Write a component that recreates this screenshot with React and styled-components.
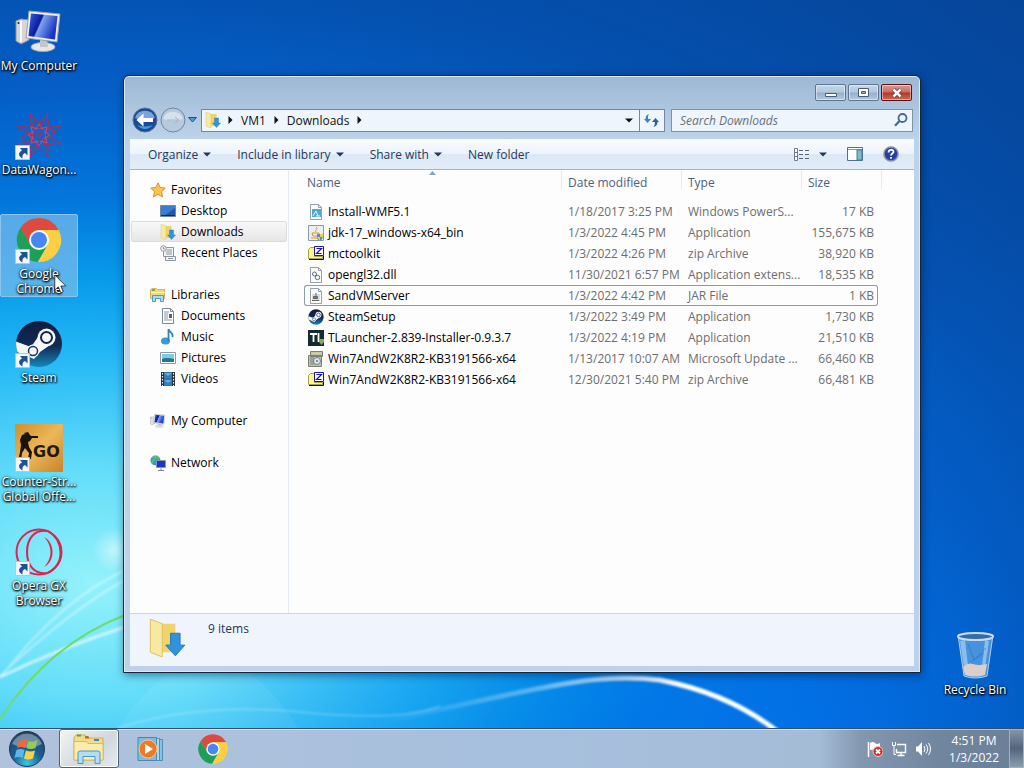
import React from "react";
import styled, { createGlobalStyle, css } from "styled-components";

const GlobalStyle = createGlobalStyle`
  * {
    box-sizing: border-box;
  }

  body {
    margin: 0;
    font-family: "Open Sans", "Noto Sans", sans-serif;
    font-size: 12px;
    line-height: 15px;
    color: #000;
  }

  button, input {
    font: inherit;
    color: inherit;
  }

  svg {
    display: block;
    flex-shrink: 0;
  }
`;

/* Desktop */

const Screen = styled.div`
  position: relative;
  display: flex;
  flex-direction: column;
  min-height: 100vh;
  overflow: hidden;
  background: radial-gradient(
      ellipse 60% 75% at 78% 100%,
      rgba(0, 124, 250, 0.65),
      rgba(0, 110, 230, 0.3) 50%,
      transparent
    ),
    radial-gradient(
      ellipse 88% 76% at 9% 76%,
      #94f2fb 0%,
      #62dcf9 20%,
      #22b6f5 40%,
      #089bea 52%,
      #0276dc 66%,
      #045fc8 84%,
      #0450ae 105%,
      #064396 150%
    );
`;

const Wallpaper = styled.svg`
  position: absolute;
  inset: 0;
  width: 100%;
  height: 100%;
`;

const Desktop = styled.main`
  position: relative;
  flex: 1;
  display: flex;
  justify-content: space-between;
  padding: 6px 10px 30px 0;
`;

const ShortcutColumn = styled.div`
  display: grid;
  grid-auto-rows: 104px;
  align-content: start;
  align-items: start;
`;

const Shortcut = styled.button`
  position: relative;
  display: flex;
  flex-direction: column;
  align-items: center;
  gap: 2px;
  width: 78px;
  padding: 1px 0 0;
  border: 1px solid transparent;
  border-radius: 2px;
  background: none;
  ${(props) =>
    props.$selected &&
    css`
      border-color: #8cc4ee;
      background: rgba(140, 195, 238, 0.62);
    `}
`;

const ShortcutLabel = styled.span`
  color: #fff;
  text-shadow: 0 1px 2px #000, 1px 1px 2px #000, 0 0 3px rgba(0, 0, 0, 0.7);
  white-space: pre;
`;

const BinSlot = styled.div`
  align-self: flex-end;
`;

const Pointer = styled.svg`
  position: absolute;
  left: 53px;
  top: 59px;
`;

/* Explorer window */

const Window = styled.section`
  position: absolute;
  inset: 75px 103px 55px 123px;
  display: flex;
  flex-direction: column;
  padding: 0 6px 6px;
  border: 1px solid #12263c;
  border-radius: 6px 6px 0 0;
  background: linear-gradient(#9db8d4, #bdd3ea 64px, #bdd2ea);
  box-shadow: inset 0 0 0 1px #dcebf7, 1px 2px 8px rgba(0, 20, 60, 0.5);
`;

const TitleBar = styled.header`
  display: flex;
  justify-content: flex-end;
  gap: 2px;
  height: 32px;
  padding: 8px 2px 0;
`;

const CaptionButton = styled.button`
  display: flex;
  align-items: center;
  justify-content: center;
  width: 31px;
  height: 17px;
  padding: 0;
  border: 1px solid ${(props) => (props.$close ? "#58131a" : "#60758f")};
  border-radius: 2px;
  background: ${(props) =>
    props.$close
      ? "linear-gradient(#dd9b93, #cb6a5f 48%, #b33527 52%, #cf6c55)"
      : "linear-gradient(#c3d6e9, #b3c8de 48%, #94afca 52%, #b2cbe2)"};
  box-shadow: inset 0 0 0 1px rgba(255, 255, 255, 0.45);
`;

const NavRow = styled.div`
  display: flex;
  align-items: center;
  height: 31px;
  padding: 0 1px 7px 2px;
`;

const RoundButton = styled.button`
  padding: 0;
  margin-right: 2px;
  border: 0;
  background: none;
`;

const BareButton = styled.button`
  display: flex;
  align-items: center;
  gap: 5px;
  padding: 0;
  border: 0;
  background: none;
`;

const AddressBar = styled.div`
  display: flex;
  flex: 1;
  align-items: center;
  height: 23px;
  margin: 0 6px 0 4px;
  padding-left: 3px;
  border: 1px solid #7088a3;
  background: #eff5fc;
`;

const Crumbs = styled.nav`
  display: flex;
  flex: 1;
  align-items: center;
  gap: 8px;
  padding-left: 7px;
`;

const Crumb = styled.a`
  color: #111;
  text-decoration: none;
`;

const RefreshButton = styled.button`
  display: flex;
  align-items: center;
  justify-content: center;
  width: 25px;
  height: 21px;
  margin-left: 6px;
  padding: 0;
  border: 0;
  border-left: 1px solid #7088a3;
  background: none;
`;

const SearchBox = styled.div`
  display: flex;
  align-items: center;
  width: 31%;
  height: 23px;
  padding: 0 4px 0 8px;
  border: 1px solid #7c93ae;
  background: #eff5fc;
`;

const SearchInput = styled.input`
  flex: 1;
  min-width: 0;
  padding: 0;
  border: 0;
  outline: 0;
  background: none;
  font-style: italic;

  &::placeholder {
    color: #66707c;
    opacity: 1;
  }
`;

const Client = styled.div`
  display: flex;
  flex: 1;
  flex-direction: column;
  min-height: 0;
  background: #fdfdfe;
`;

const Toolbar = styled.div`
  display: flex;
  align-items: center;
  gap: 26px;
  height: 31px;
  padding: 0 15px 0 18px;
  border-bottom: 1px solid #a3b4cb;
  background: linear-gradient(#fafcff, #edf4fc 48%, #dde8f5 52%, #e3edf8);
  color: #1e395b;
`;

const ToolbarRight = styled.div`
  display: flex;
  align-items: center;
  gap: 20px;
  margin-left: auto;
`;

const Panes = styled.div`
  display: flex;
  flex: 1;
  min-height: 0;
`;

const Sidebar = styled.nav`
  width: 159px;
  padding: 9px 1px;
  border-right: 1px solid #e3e9f2;
`;

const Group = styled.div`
  margin-bottom: 21px;
`;

const Place = styled.a`
  display: flex;
  align-items: center;
  gap: 5px;
  height: 21px;
  padding-left: ${(props) => (props.$child ? 28 : 18)}px;
  border: 1px solid ${(props) => (props.$selected ? "#dcdcdc" : "transparent")};
  border-radius: 2px;
  background: ${(props) =>
    props.$selected ? "linear-gradient(#f8f8f8, #e6e6e6)" : "none"};
  color: #000;
  text-decoration: none;
`;

const FilePane = styled.div`
  flex: 1;
  min-width: 0;
  padding: 0 32px 0 15px;
`;

const FileTable = styled.table`
  width: 100%;
  table-layout: fixed;
  border-collapse: separate;
  border-spacing: 0;
  white-space: nowrap;
`;

const divider = css`
  background: linear-gradient(#e2e8f0, #e9edf3) right top / 1px 19px no-repeat;
`;

const HeadCell = styled.th`
  position: relative;
  width: ${(props) => props.$width || "auto"};
  height: 31px;
  padding: 5px 0 0 ${(props) => (props.$first ? 3 : 6)}px;
  color: #4c607a;
  font-weight: 400;
  text-align: left;
  vertical-align: top;
  ${(props) => !props.$last && divider}
`;

const HeadEnd = styled.td`
  width: 4px;
  padding: 0;
  ${divider}
`;

const SortMark = styled.svg`
  position: absolute;
  left: calc(50% - 4px);
  top: 1px;
`;

const FileRow = styled.tr`
  td {
    height: 21px;
    padding: 0 0 0 6px;
    border: solid transparent;
    border-width: 1px 0;
    color: #6d6d6d;
  }

  td:first-child {
    padding-left: 3px;
    border-left-width: 1px;
    border-radius: 3px 0 0 3px;
    color: #000;
  }

  td:last-child {
    padding-right: 3px;
    border-right-width: 1px;
    border-radius: 0 3px 3px 0;
    text-align: right;
  }

  ${(props) =>
    props.$focused &&
    css`
      td {
        border-color: #8b9bb0;
      }
    `}
`;

const FileName = styled.span`
  display: flex;
  align-items: center;
  gap: 4px;
`;

const DetailsPane = styled.footer`
  display: flex;
  gap: 22px;
  height: 53px;
  padding: 5px 18px;
  border-top: 1px solid #cfd5de;
  background: #f0f4fc;
  color: #1e395b;
`;

const ItemCount = styled.span`
  padding-top: 2px;
`;

/* Taskbar */

const Taskbar = styled.footer`
  position: relative;
  display: flex;
  height: 40px;
  border-top: 1px solid #31506f;
  background: linear-gradient(
    to right,
    #b0c2dc,
    #a7c0dd 50%,
    #a5bcd7 80%,
    #8397b0 84%,
    #71859f 92%,
    #6a7f98
  );
  box-shadow: inset 0 1px 0 rgba(255, 255, 255, 0.5);
`;

const StartButton = styled.button`
  width: 58px;
  padding: 0 0 0 8px;
  border: 0;
  background: none;
`;

const TaskButton = styled.button`
  display: flex;
  align-items: center;
  justify-content: center;
  width: 60px;
  margin: 0 1px;
  padding: 0;
  border: 1px solid ${(props) => (props.$active ? "#4f6279" : "transparent")};
  border-radius: 3px;
  background: ${(props) =>
    props.$active ? "linear-gradient(135deg, #f2f4f6, #cfd7e0 60%, #e6ebf0)" : "none"};
  ${(props) => props.$active && "box-shadow: inset 0 0 0 1px #fff;"}
`;

const Tray = styled.div`
  display: flex;
  align-items: center;
  gap: 8px;
  margin-left: auto;
`;

const Clock = styled.time`
  padding: 0 2px 0 10px;
  color: #fff;
  line-height: 17px;
  text-align: center;
`;

const ShowDesktop = styled.button`
  width: 15px;
  height: 39px;
  padding: 0;
  border: 1px solid #a2b1c1;
  background: linear-gradient(#8494a6, #52667c 50%, #8a9bad);
`;

/* Drawings */

const Caret = ({ color = "#1e395b" }) => (
  <svg width="8" height="5" viewBox="0 0 8 5">
    <path d="M0 .5h8l-4 4z" fill={color} />
  </svg>
);

const CrumbArrow = () => (
  <svg width="5" height="8" viewBox="0 0 5 8">
    <path d="M.5 0l4 4-4 4z" fill="#111" />
  </svg>
);

const ShortcutArrow = () => (
  <g>
    <path d="M.5 33.500h14v14H.5z" fill="#f4f8fc" stroke="#b8c6d4" strokeWidth="1" />
    <path
      d="M5 36h7.500v7.500L10 41c-2 1-3 2.600-2.500 5.500C3 44 3 40.500 7 38.500z"
      fill="#1d5294"
      stroke="none"
    />
  </g>
);

const ChromeMark = () => (
  <g>
    <path d="M24 14H43.600A22 22 0 0 0 5.500 12L15.340 29 24 24z" fill="#de4b3d" />
    <path
      d="M24 14H43.600A22 22 0 0 0 5.500 12L15.340 29 24 24z"
      fill="#1e9e58"
      transform="rotate(-120 24 24)"
    />
    <path
      d="M24 14H43.600A22 22 0 0 0 5.500 12L15.340 29 24 24z"
      fill="#fdcf43"
      transform="rotate(120 24 24)"
    />
    <circle cx="24" cy="24" r="10" fill="#fff" />
    <circle cx="24" cy="24" r="8" fill="#4587f3" />
  </g>
);

const ComputerIcon = ({ size = 48 }) => (
  <svg width={size} height={size} viewBox="0 0 48 48">
    <defs>
      <linearGradient id="screen" x1="0" y1="0" x2="1" y2=".4">
        <stop offset="0" stopColor="#3b62df" />
        <stop offset=".45" stopColor="#0a1ba0" />
        <stop offset=".5" stopColor="#7fa2ee" />
        <stop offset="1" stopColor="#1734c4" />
      </linearGradient>
    </defs>
    <path d="M1 13l5-2 8 1v20l-8 4-5-3z" fill="#d4d6d8" stroke="#8f9498" />
    <path d="M6 13v21" stroke="#f7f7f7" strokeWidth="2" />
    <circle cx="3.500" cy="15" r="1" fill="#222" />
    <ellipse cx="28" cy="39" rx="12" ry="4.500" fill="#e6e7e9" stroke="#a7abb0" />
    <path d="M25 30l7 1 1 8h-8z" fill="#c3c7cb" />
    <path d="M14 3l31 3-3 28-31-4z" fill="#eceef0" stroke="#9ba1a8" />
    <path d="M16 5.500l26.500 2.600-2.500 23.400-26.500-3.500z" fill="url(#screen)" />
  </svg>
);

const DataWagonIcon = () => (
  <svg width="48" height="48" viewBox="0 0 48 48">
    <g fill="none" stroke="#a8305a" strokeWidth=".8">
      {[0, 45, 90, 135, 180, 225, 270, 315].map((a) => (
        <g key={a} transform={`rotate(${a} 24 23)`}>
          <path d="M24 15l9-7 1 9-10 5M15 2l9 8 9-8M24 10v5M15 2l3 13" />
          <path d="M20 18l4-6 4 6" stroke="#e0405f" strokeWidth="1" />
          <circle cx="15" cy="2" r=".8" fill="#d6324f" />
        </g>
      ))}
    </g>
    <ShortcutArrow />
  </svg>
);

const ChromeIcon = ({ size = 48, shortcut }) => (
  <svg width={size} height={size} viewBox="0 0 48 48">
    <ChromeMark />
    {shortcut && <ShortcutArrow />}
  </svg>
);

const SteamIcon = ({ size = 48, shortcut }) => (
  <svg width={size} height={size} viewBox="0 0 48 48">
    <defs>
      <linearGradient id="steam" x1="0" y1="0" x2="0" y2="1">
        <stop offset="0" stopColor="#121a3c" />
        <stop offset=".55" stopColor="#102c58" />
        <stop offset="1" stopColor="#1786b8" />
      </linearGradient>
      <clipPath id="disc">
        <circle cx="24" cy="24" r="23" />
      </clipPath>
    </defs>
    <circle cx="24" cy="24" r="23" fill="url(#steam)" />
    <g clipPath="url(#disc)">
      <path d="M0 21l16 6 7-10 15 6-13 9-6 7-19-8z" fill="#f4f6f8" />
    </g>
    <circle cx="18" cy="31" r="6.500" fill="#f4f6f8" />
    <circle cx="18" cy="31" r="4.500" fill="none" stroke="#17365f" strokeWidth="1.500" />
    <circle cx="31.500" cy="17.500" r="9" fill="#f4f6f8" />
    <circle cx="31.500" cy="17.500" r="5.500" fill="#f4f6f8" stroke="#15264b" strokeWidth="2" />
    {shortcut && <ShortcutArrow />}
  </svg>
);

const CounterStrikeIcon = () => (
  <svg width="48" height="48" viewBox="0 0 48 48">
    <defs>
      <linearGradient id="sand" x1="0" y1="0" x2="1" y2="1">
        <stop offset="0" stopColor="#cf8f2c" />
        <stop offset=".5" stopColor="#eab75a" />
        <stop offset="1" stopColor="#c98428" />
      </linearGradient>
    </defs>
    <path d="M0 0h48v48H0z" fill="url(#sand)" />
    <path
      d="M9 9l4-1 2 3 1 1h7v2h-6l-2 3-2 1 1 5 3 5-1 7h-3l1-6-4-5-3 5-1 8H3l2-9 1-7-1-5 2-5 3-1z"
      fill="#1c1409"
    />
    <text
      x="18"
      y="33"
      fontFamily="DejaVu Sans, sans-serif"
      fontSize="16"
      fontWeight="700"
      fill="#241a0c"
    >
      GO
    </text>
    <ShortcutArrow />
  </svg>
);

const OperaIcon = () => (
  <svg width="48" height="48" viewBox="0 0 48 48" fill="none" stroke="#dc2450">
    <circle cx="24" cy="24" r="22.500" strokeWidth="2" />
    <path
      d="M33 3C20 1 12 10 12 24s8 23 21 21M33 3C40 7 45 14 45.500 24S40 41 33 45"
      strokeWidth="2"
    />
    <path
      d="M29 9c6 3 8.500 9 8.500 15s-2.500 12-8.500 15c4-4 6.500-9 6.500-15S33 13 29 9z"
      fill="#dc2450"
      stroke="none"
    />
    <ShortcutArrow />
  </svg>
);

const BinIcon = () => (
  <svg width="48" height="48" viewBox="0 0 48 48">
    <path d="M7 3h35l-6 41q-12 4-23 0z" fill="#75b2e8" fillOpacity=".6" stroke="#acd2ee" />
    <path d="M9 9l5 33h4L14 8zM38 9l-5 34h-3l4-35z" fill="#d3e8f8" fillOpacity=".5" />
    <path d="M12 35q5-5 10-3t14 0l-2 11q-10 3-20 0z" fill="#dccfca" />
    <path d="M17 12l6 16 12-12M20 30l13-9" fill="none" stroke="#3674ba" strokeOpacity=".7" />
    <ellipse cx="24.500" cy="4.500" rx="17.500" ry="3.500" fill="#346aa8" stroke="#c7dceb" strokeWidth="2" />
  </svg>
);

const FolderIcon = ({ size = 16 }) => (
  <svg width={size} height={size} viewBox="0 0 16 16">
    <path d="M5 2h6.500v12H5z" fill="#efd36d" />
    <path d="M1 0l5 2v14l-5-2z" fill="#f7e8a2" stroke="#dcc05c" strokeWidth=".4" />
    <path d="M9.500 6h4v5h2l-4 4.500L7.500 11h2z" fill="#3093dc" stroke="#2272bb" strokeWidth=".4" />
  </svg>
);

const StarIcon = () => (
  <svg width="16" height="16" viewBox="0 0 16 16">
    <path
      d="M8 .8l2.200 4.700 5.100.6-3.800 3.500 1 5.200L8 12.300l-4.500 2.500 1-5.200L.7 6.100l5.100-.6z"
      fill="#fcc34e"
      stroke="#e78a2d"
    />
  </svg>
);

const DesktopIcon = () => (
  <svg width="16" height="16" viewBox="0 0 16 16">
    <path d="M.5 2.500h15v11H.5z" fill="#2457a8" stroke="#6f87a3" />
    <path d="M1 3h14v2L5 12H1z" fill="#3d7dd0" />
    <path d="M1 12h14v1H1z" fill="#1b2b44" />
  </svg>
);

const RecentIcon = () => (
  <svg width="16" height="16" viewBox="0 0 16 16" fill="#f2f4f6" stroke="#8d969f">
    <path d="M3.500 2.500h10v9h-10zM5.500 11.500h10v4h-10z" />
    <circle cx="3.500" cy="3.500" r="2.800" />
    <path d="M3.500 2v2H5M7 5h5M6 7h6M6 9h6M8 13.500h5" fill="none" />
  </svg>
);

const LibraryIcon = () => (
  <svg width="16" height="16" viewBox="0 0 16 16">
    <path d="M.5 2.500l2-1h4l1 1h7v9H.5z" fill="#f5d977" stroke="#d8b44d" />
    <path d="M2 3h3" stroke="#49a24a" strokeWidth="1.500" />
    <path d="M1 5.500h14" stroke="#fff2b5" />
    <path d="M2.500 14.500v-6h11v6h-3v-3h-5v3z" fill="#a5dcf3" stroke="#4b9ecb" />
  </svg>
);

const DocumentIcon = () => (
  <svg width="16" height="16" viewBox="0 0 16 16">
    <path d="M2.500.5h8l3 3v12h-11z" fill="#fff" stroke="#7f8994" />
    <path d="M10.500.5v3h3" fill="none" stroke="#7f8994" />
    <path d="M4 4h5M4 6h4M4 8h4M4 10h4M4 12h8" stroke="#8b97a5" />
    <path d="M9 6h3v4H9z" fill="#59626d" />
  </svg>
);

const MusicIcon = () => (
  <svg width="16" height="16" viewBox="0 0 16 16">
    <ellipse cx="5.500" cy="12" rx="4.500" ry="3.500" fill="#3a9ad8" />
    <path d="M8.500 12V0c1 3.500 5 3.500 4 8" fill="none" stroke="#2b82c6" strokeWidth="1.800" />
  </svg>
);

const PictureIcon = () => (
  <svg width="16" height="16" viewBox="0 0 16 16">
    <path d="M.5 2.500h15v11H.5z" fill="#fff" stroke="#8d98a3" />
    <path d="M2 4h12v8H2z" fill="#7bcbe9" />
    <path d="M2 9q4-2 12 0v3H2z" fill="#247789" />
  </svg>
);

const VideoIcon = () => (
  <svg width="16" height="16" viewBox="0 0 16 16">
    <path d="M1 1h14v14H1z" fill="#2b3138" />
    <path d="M4 1.500h8v6H4zM4 8.500h8v6H4z" fill="#5caee5" />
    <path d="M4 2l4 3 4-3v5H4zM4 9l4 3 4-3v5H4z" fill="#2f80c0" />
    <path d="M2.500 2v13M13.500 2v13" stroke="#fff" strokeDasharray="1.500 1.500" />
  </svg>
);

const NetworkIcon = () => (
  <svg width="16" height="16" viewBox="0 0 16 16">
    <circle cx="5.500" cy="5.500" r="5" fill="#2c9bc6" />
    <path d="M2 3c3-3 5-1 3 1S1 7 3 8M7 1l2 3" stroke="#62c470" strokeWidth="1.500" fill="none" />
    <path d="M6.500 5.500h9v7h-9z" fill="#1c35c5" stroke="#8a98ac" />
    <path d="M11 13v2M8 15.500h6" stroke="#7b8898" />
  </svg>
);

const PageShape = () => (
  <>
    <path d="M2.500.5h8l3 3v12h-11z" fill="#fbfcfd" stroke="#97a1ac" />
    <path d="M10.500.5v3h3" fill="none" stroke="#97a1ac" />
  </>
);

const FileIcon = ({ kind }) => {
  if (kind === "steam") return <SteamIcon size={16} />;
  return (
    <svg width="16" height="16" viewBox="0 0 16 16">
      {kind === "script" && (
        <>
          <PageShape />
          <path d="M4 5h9v8H4z" fill="#50aacf" />
          <path d="M5 12l3-5 2 5M8 12h4" stroke="#e6f5fb" fill="none" />
        </>
      )}
      {kind === "java" && (
        <>
          <path d="M.5.5h15v15H.5z" fill="#eceff1" stroke="#8c9aa7" />
          <path d="M8 2c3 2-2 3 0 5M4 8h7v3H5zM3 13h9" stroke="#d8912c" fill="none" />
          <path d="M9 9h6v3q-1 3-3 4-3-1-3-4z" fill="#538dc5" />
          <path d="M12 9h3v3h-3zM9 12h3v4z" fill="#e9d34b" />
        </>
      )}
      {kind === "zip" && (
        <>
          <path d="M.5 3.500l2-2h4v9h8v2H.5z" fill="#fbf88c" stroke="#a5a243" />
          <path d="M1 13.500h14.500V10" stroke="#111" fill="none" />
          <path d="M6.500.5h9v9h-9z" fill="#fff" stroke="#1b16a0" />
          <path d="M8.500 2.500h5l-5 5h5" fill="none" stroke="#1b16a0" strokeWidth="1.200" />
        </>
      )}
      {kind === "dll" && (
        <>
          <PageShape />
          <circle cx="6.500" cy="7" r="2" fill="none" stroke="#5e6b78" />
          <circle cx="9.500" cy="10.500" r="2.200" fill="none" stroke="#5e6b78" />
        </>
      )}
      {kind === "jar" && (
        <>
          <PageShape />
          <path d="M4 6h8v7H4z" fill="#d8dcdf" />
          <path d="M5.500 8.500h4v2h-4zM8 5v3M4 12.500h7" fill="#777" stroke="#666" />
        </>
      )}
      {kind === "launcher" && (
        <>
          <path d="M0 0h16v16H0z" fill="#142b2f" />
          <path d="M2 4h7M5.500 4v8M10.500 3v8h2" stroke="#fff" strokeWidth="1.800" fill="none" />
          <path d="M11 9h5v3l-2.500 3-2.500-3z" fill="#87a85f" />
        </>
      )}
      {kind === "update" && (
        <>
          <path d="M2.500.5h12v5h-12zM.5 4.500h13v11H.5z" fill="#bfc3b4" stroke="#7b8074" />
          <path d="M4 2.500h9" stroke="#d9d27c" strokeWidth="1.500" />
          <path d="M2 6h4v8H2z" fill="#9ba394" />
          <circle cx="9" cy="10" r="3.500" fill="#dfe5e7" stroke="#78828a" />
          <circle cx="9" cy="10" r="1" fill="#6c7880" />
        </>
      )}
    </svg>
  );
};

const StartOrb = () => (
  <svg width="38" height="38" viewBox="0 0 38 38">
    <defs>
      <radialGradient id="orb" cx=".5" cy=".9" r=".9">
        <stop offset="0" stopColor="#37c8e8" />
        <stop offset=".45" stopColor="#1c5f95" />
        <stop offset="1" stopColor="#223f62" />
      </radialGradient>
    </defs>
    <circle cx="19" cy="19" r="17.500" fill="url(#orb)" stroke="#22384f" />
    <path d="M4 14a16 16 0 0 1 30 0q-14 7-30 0z" fill="#c8dcea" fillOpacity=".45" />
    <path d="M11 11q4-3 8-1l-2 8q-4-2-8 0z" fill="#ee6a33" />
    <path d="M20.500 11q4 2 9-1l-2 8q-5 2-9 0z" fill="#9acb48" />
    <path d="M8.500 20q4-2 8 0l-2 8q-4-2-8 0z" fill="#5fb5ea" />
    <path d="M18 20.500q4 2 9 0l-2 8q-5 2-9 0z" fill="#fbd14c" />
  </svg>
);

const ExplorerIcon = () => (
  <svg width="34" height="32" viewBox="0 0 34 32">
    <path d="M2 5l2-3h9l2 3h16v22H2z" fill="#f3dc84" stroke="#cfae50" />
    <path d="M5 2.500h4M13 4h3" stroke="#5f9f4d" strokeWidth="2" />
    <path d="M13 4.500h4" stroke="#d65b3d" strokeWidth="2" />
    <path d="M22 7h5" stroke="#3f85ca" strokeWidth="2" />
    <path d="M2 8.500h12l2 2h15V27H2z" fill="#fbedae" stroke="#d7ba61" />
    <path d="M6 30.500V20q0-2 2-2h18q2 0 2 2v10.500h-5v-7H11v7z" fill="#b4ddf2" stroke="#4698c8" />
  </svg>
);

const MediaIcon = () => (
  <svg width="28" height="26" viewBox="0 0 28 26">
    <path d="M7 3.500h18.500v21H7z" fill="#8ec1df" stroke="#4d8fb8" />
    <path d="M4 2.500h18.500v22H4z" fill="#b1d6ea" stroke="#4d8fb8" />
    <path d="M1 1.500h18.500v23H1z" fill="#80bbdc" stroke="#4689b3" />
    <circle cx="11" cy="13" r="9" fill="#ee7a25" stroke="#fac797" />
    <path d="M8 8l8 5-8 5z" fill="#fff" />
  </svg>
);

const SearchIcon = () => (
  <svg width="14" height="14" viewBox="0 0 14 14" fill="none" stroke="#416a9c">
    <circle cx="8.500" cy="5" r="4" strokeWidth="1.800" />
    <path d="M5.500 8L1 12.800" strokeWidth="2.300" />
  </svg>
);

const shortcuts = [
  { label: "My Computer", icon: <ComputerIcon /> },
  { label: "DataWagon...", icon: <DataWagonIcon /> },
  { label: "Google\nChrome", icon: <ChromeIcon shortcut />, selected: true },
  { label: "Steam", icon: <SteamIcon shortcut /> },
  { label: "Counter-Str...\nGlobal Offe...", icon: <CounterStrikeIcon /> },
  { label: "Opera GX\nBrowser", icon: <OperaIcon /> },
];

const places = [
  {
    label: "Favorites",
    icon: <StarIcon />,
    items: [
      { label: "Desktop", icon: <DesktopIcon /> },
      { label: "Downloads", icon: <FolderIcon />, selected: true },
      { label: "Recent Places", icon: <RecentIcon /> },
    ],
  },
  {
    label: "Libraries",
    icon: <LibraryIcon />,
    items: [
      { label: "Documents", icon: <DocumentIcon /> },
      { label: "Music", icon: <MusicIcon /> },
      { label: "Pictures", icon: <PictureIcon /> },
      { label: "Videos", icon: <VideoIcon /> },
    ],
  },
  { label: "My Computer", icon: <ComputerIcon size={16} />, items: [] },
  { label: "Network", icon: <NetworkIcon />, items: [] },
];

const files = [
  ["script", "Install-WMF5.1", "1/18/2017 3:25 PM", "Windows PowerS...", "17 KB"],
  ["java", "jdk-17_windows-x64_bin", "1/3/2022 4:45 PM", "Application", "155,675 KB"],
  ["zip", "mctoolkit", "1/3/2022 4:26 PM", "zip Archive", "38,920 KB"],
  ["dll", "opengl32.dll", "11/30/2021 6:57 PM", "Application extens...", "18,535 KB"],
  ["jar", "SandVMServer", "1/3/2022 4:42 PM", "JAR File", "1 KB"],
  ["steam", "SteamSetup", "1/3/2022 3:49 PM", "Application", "1,730 KB"],
  ["launcher", "TLauncher-2.839-Installer-0.9.3.7", "1/3/2022 4:19 PM", "Application", "21,510 KB"],
  ["update", "Win7AndW2K8R2-KB3191566-x64", "1/13/2017 10:07 AM", "Microsoft Update ...", "66,460 KB"],
  ["zip", "Win7AndW2K8R2-KB3191566-x64", "12/30/2021 5:40 PM", "zip Archive", "66,481 KB"],
];

const Backdrop = () => (
  <Wallpaper viewBox="0 0 1024 768" preserveAspectRatio="none" fill="none" aria-hidden="true">
    <defs>
      <filter id="soft">
        <feGaussianBlur stdDeviation="1" />
      </filter>
      <radialGradient id="glow">
        <stop offset="0" stopColor="#fff" stopOpacity=".5" />
        <stop offset="1" stopColor="#fff" stopOpacity="0" />
      </radialGradient>
      <linearGradient id="arc" x1="380" x2="780" y1="0" y2="0" gradientUnits="userSpaceOnUse">
        <stop offset="0" stopColor="#fff" stopOpacity="0" />
        <stop offset=".4" stopColor="#fff" stopOpacity=".35" />
        <stop offset=".75" stopColor="#fff" />
      </linearGradient>
    </defs>
    <path d="M118 728Q210 590 298 728z" fill="#fff" fillOpacity=".06" />
    <circle cx="114" cy="550" r="22" fill="url(#glow)" />
    <g filter="url(#soft)">
      <path d="M0 678Q60 600 125 570M0 676Q70 610 125 580" stroke="#fff" strokeOpacity=".4" strokeWidth="2" />
      <path d="M0 677Q60 648 125 627" stroke="#fff" strokeOpacity=".6" strokeWidth="3" />
      <path d="M118 728Q200 702 300 712T440 706" stroke="#fff" strokeOpacity=".2" strokeWidth="2" />
      <path d="M380 722C520 694 585 671 660 680C710 690 748 708 778 732" stroke="url(#arc)" strokeWidth="5" />
    </g>
    <path d="M0 719Q48 645 125 615" stroke="#6fdc6a" strokeWidth="2" />
  </Wallpaper>
);

const Explorer = () => (
  <Window aria-label="Downloads">
    <TitleBar>
      <CaptionButton aria-label="Minimize">
        <svg width="12" height="10" viewBox="0 0 12 10">
          <path d="M.5 5.500h11v3H.5z" fill="#fff" stroke="#4b5a6d" />
        </svg>
      </CaptionButton>
      <CaptionButton aria-label="Maximize">
        <svg width="11" height="9" viewBox="0 0 11 9">
          <path d="M.5.5h10v8H.5z" fill="#fff" stroke="#4b5a6d" />
          <path d="M3.500 3.500h4v2h-4z" fill="#9db3cb" stroke="#4b5a6d" />
        </svg>
      </CaptionButton>
      <CaptionButton $close aria-label="Close">
        <svg width="12" height="10" viewBox="0 0 12 10">
          <path d="M2.500 1.500l7 7M9.500 1.500l-7 7" stroke="#59303a" strokeWidth="4" />
          <path d="M2.500 1.500l7 7M9.500 1.500l-7 7" stroke="#fff" strokeWidth="2.500" />
        </svg>
      </CaptionButton>
    </TitleBar>
    <NavRow>
      <RoundButton aria-label="Back">
        <svg width="26" height="26" viewBox="0 0 26 26">
          <circle cx="13" cy="13" r="12" fill="#1d4a97" stroke="#5b7391" />
          <path d="M3 11a10.500 10.500 0 0 1 20 0q-10 4-20 0z" fill="#7ca4d8" />
          <path d="M5 18q8 8 16 0-8 3-16 0z" fill="#3ba1e6" />
          <path d="M4.500 13l7-6.500V11H21v4h-9.500v4.500z" fill="#fff" />
        </svg>
      </RoundButton>
      <RoundButton aria-label="Forward">
        <svg width="26" height="26" viewBox="0 0 26 26">
          <circle cx="13" cy="13" r="12" fill="#b6c9dd" stroke="#71859d" />
          <path d="M3 12a10.500 10.500 0 0 1 20 0q-10 3-20 0z" fill="#d5e1ed" />
          <path d="M7 13h11M15 10l4 3-4 3" stroke="#a1b6cc" fill="none" />
        </svg>
      </RoundButton>
      <BareButton aria-label="Recent pages">
        <svg width="9" height="6" viewBox="0 0 9 6">
          <path d="M.5.500h8l-4 4.500z" fill="#4f9bd6" stroke="#234f84" />
        </svg>
      </BareButton>
      <AddressBar>
        <FolderIcon />
        <Crumbs aria-label="Address">
          <CrumbArrow />
          <Crumb href="#vm1">VM1</Crumb>
          <CrumbArrow />
          <Crumb href="#downloads">Downloads</Crumb>
          <CrumbArrow />
        </Crumbs>
        <BareButton aria-label="Previous locations">
          <Caret color="#111" />
        </BareButton>
        <RefreshButton aria-label="Refresh">
          <svg width="15" height="13" viewBox="0 0 15 13">
            <path d="M5 0Q3.500 1.500 4 5h3L3.500 9 0 5h1.500Q1.500 1 5 0z" fill="#3c83c5" />
            <path d="M9.500 13q1.500-1.500 1.500-5H8l3.500-4L15 8h-1.500q0 4-4 5z" fill="#2b5e9f" />
          </svg>
        </RefreshButton>
      </AddressBar>
      <SearchBox>
        <SearchInput type="text" placeholder="Search Downloads" aria-label="Search Downloads" />
        <SearchIcon />
      </SearchBox>
    </NavRow>
    <Client>
      <Toolbar>
        <BareButton>
          Organize <Caret />
        </BareButton>
        <BareButton>
          Include in library <Caret />
        </BareButton>
        <BareButton>
          Share with <Caret />
        </BareButton>
        <BareButton>New folder</BareButton>
        <ToolbarRight>
          <BareButton aria-label="Change your view">
            <svg width="20" height="13" viewBox="0 0 20 13">
              <path d="M.5.5h3v12h-3zM.5 4.500h3M.5 8.500h3" fill="#fff" stroke="#6d7b8c" />
              <path d="M5 2.500h4M11 2.500h4M5 6.500h4M11 6.500h4M5 10.500h4M11 10.500h4" stroke="#566475" />
            </svg>
            <Caret />
          </BareButton>
          <BareButton aria-label="Preview pane">
            <svg width="16" height="14" viewBox="0 0 16 14">
              <path d="M.5.5h15v13H.5z" fill="#fff" stroke="#4c7192" />
              <path d="M1 2.500h14" stroke="#7c9cb8" />
              <path d="M10 3h5v10h-5z" fill="#7dbdc7" stroke="#44778f" />
            </svg>
          </BareButton>
          <BareButton aria-label="Help">
            <svg width="16" height="16" viewBox="0 0 16 16">
              <circle cx="8" cy="8" r="7" fill="#263fa0" stroke="#8290a8" strokeWidth="1.500" />
              <path
                d="M5.500 6.500c0-3.500 5-3.500 5-.8C10.500 7.500 8 7.500 8 9.500M8 11v1.800"
                fill="none"
                stroke="#fff"
                strokeWidth="1.800"
              />
            </svg>
          </BareButton>
        </ToolbarRight>
      </Toolbar>
      <Panes>
        <Sidebar aria-label="Places">
          {places.map((group) => (
            <Group key={group.label}>
              <Place href="#place">
                {group.icon}
                {group.label}
              </Place>
              {group.items.map((item) => (
                <Place key={item.label} href="#place" $child $selected={item.selected}>
                  {item.icon}
                  {item.label}
                </Place>
              ))}
            </Group>
          ))}
        </Sidebar>
        <FilePane>
          <FileTable>
            <thead>
              <tr>
                <HeadCell $first>
                  Name
                  <SortMark width="7" height="4" viewBox="0 0 7 4">
                    <path d="M0 4l3.500-4L7 4z" fill="#7fa3c2" />
                  </SortMark>
                </HeadCell>
                <HeadCell $width="120px">Date modified</HeadCell>
                <HeadCell $width="120px">Type</HeadCell>
                <HeadCell $last $width="76px">
                  Size
                </HeadCell>
                <HeadEnd />
              </tr>
            </thead>
            <tbody>
              {files.map(([kind, name, date, type, size]) => (
                <FileRow key={date} $focused={kind === "jar"}>
                  <td>
                    <FileName>
                      <FileIcon kind={kind} />
                      {name}
                    </FileName>
                  </td>
                  <td>{date}</td>
                  <td>{type}</td>
                  <td>{size}</td>
                </FileRow>
              ))}
            </tbody>
          </FileTable>
        </FilePane>
      </Panes>
      <DetailsPane>
        <FolderIcon size={38} />
        <ItemCount>9 items</ItemCount>
      </DetailsPane>
    </Client>
  </Window>
);

const App = () => (
  <>
    <GlobalStyle />
    <Screen>
      <Backdrop />
      <Desktop>
        <ShortcutColumn>
          {shortcuts.map(({ label, icon, selected }) => (
            <Shortcut key={label} $selected={selected}>
              {icon}
              <ShortcutLabel>{label}</ShortcutLabel>
              {selected && (
                <Pointer width="13" height="20" viewBox="0 0 13 20">
                  <path
                    d="M.8 1v15l3.500-3.200 2.500 6 2.500-1-2.500-5.800h5z"
                    fill="#fff"
                    stroke="#222"
                    strokeWidth=".8"
                  />
                </Pointer>
              )}
            </Shortcut>
          ))}
        </ShortcutColumn>
        <BinSlot>
          <Shortcut>
            <BinIcon />
            <ShortcutLabel>Recycle Bin</ShortcutLabel>
          </Shortcut>
        </BinSlot>
        <Explorer />
      </Desktop>
      <Taskbar>
        <StartButton aria-label="Start">
          <StartOrb />
        </StartButton>
        <TaskButton $active aria-label="Windows Explorer">
          <ExplorerIcon />
        </TaskButton>
        <TaskButton aria-label="Windows Media Player">
          <MediaIcon />
        </TaskButton>
        <TaskButton aria-label="Google Chrome">
          <ChromeIcon size={32} />
        </TaskButton>
        <Tray>
          <svg width="16" height="16" viewBox="0 0 16 16">
            <path d="M1.500 1v15" stroke="#fff" strokeWidth="1.500" />
            <path d="M3 2q3-2 5 0t5 0v7q-3 1-5 0T3 9z" fill="#fff" />
            <circle cx="11" cy="10.500" r="5" fill="#cc2f2a" stroke="#f4c8c4" />
            <path d="M9 8.500l4 4M13 8.500l-4 4" stroke="#fff" strokeWidth="1.800" />
          </svg>
          <svg width="16" height="16" viewBox="0 0 16 16" fill="none" stroke="#fff">
            <path d="M6 3.500h8.500v8H5.500V8M10 12v2M6.500 14.500h7" strokeWidth="1.400" />
            <path d="M1.500 1v3.500h3V1M3 4.500v9h2" />
          </svg>
          <svg width="16" height="16" viewBox="0 0 16 16">
            <path d="M1 5.500h2L7 1v14l-4-4.500H1z" fill="#fff" />
            <path d="M9 5q2 3 0 6M11 3.500q3.500 4.500 0 9M13.500 2q4 6 0 12" stroke="#fff" fill="none" />
          </svg>
          <Clock>
            4:51 PM
            <br />
            1/3/2022
          </Clock>
          <ShowDesktop aria-label="Show desktop" />
        </Tray>
      </Taskbar>
    </Screen>
  </>
);

export default App;
